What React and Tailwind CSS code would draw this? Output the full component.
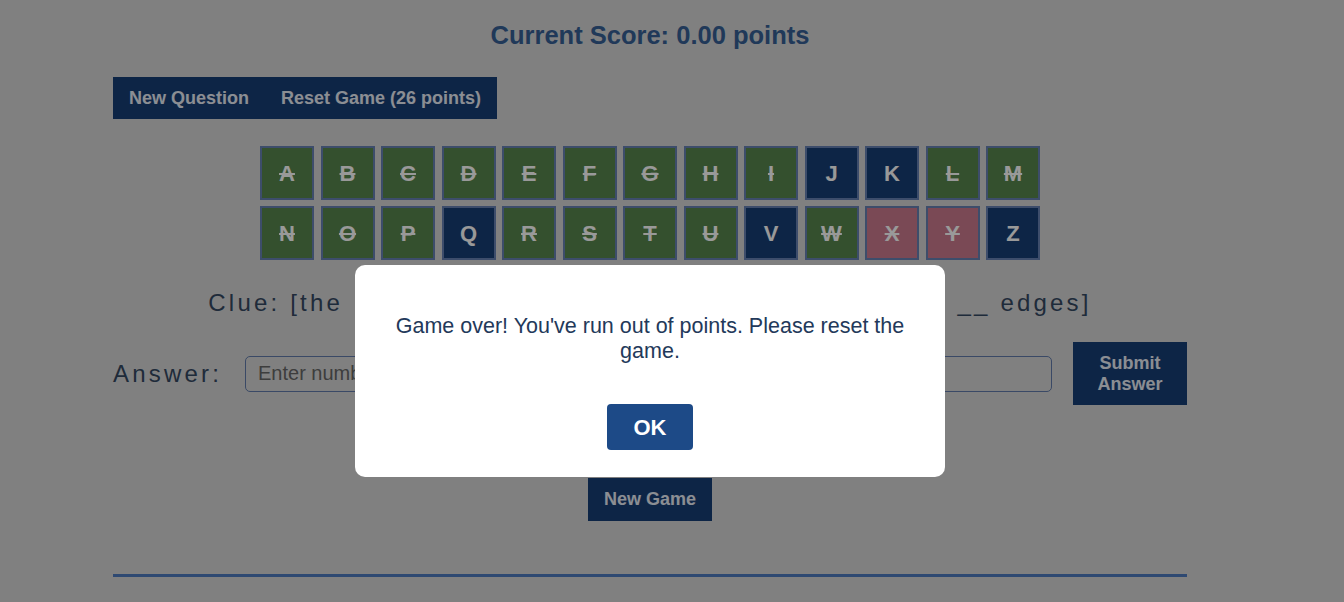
const LETTERS = [
  ['A', 'used'], ['B', 'used'], ['C', 'used'], ['D', 'used'], ['E', 'used'], ['F', 'used'], ['G', 'used'],
  ['H', 'used'], ['I', 'used'], ['J', 'open'], ['K', 'open'], ['L', 'used'], ['M', 'used'],
  ['N', 'used'], ['O', 'used'], ['P', 'used'], ['Q', 'open'], ['R', 'used'], ['S', 'used'], ['T', 'used'],
  ['U', 'used'], ['V', 'open'], ['W', 'used'], ['X', 'wrong'], ['Y', 'wrong'], ['Z', 'open'],
];

const tileStyles = {
  used: 'bg-[#57854d] line-through',
  wrong: 'bg-[#cb7b8e] line-through',
  open: 'bg-[#173e75] border-[#173e75]',
};

function Tile({ letter, state }) {
  return (
    <div
      className={`w-[54px] h-[54px] box-border border-2 border-[#6780b2] flex items-center justify-center text-[22px] font-bold text-white decoration-2 ${tileStyles[state]}`}
    >
      {letter}
    </div>
  );
}

export default function App() {
  return (
    <div className="min-h-[602px] bg-[#d6d6d6] font-['Liberation_Sans',Arial,sans-serif] relative overflow-hidden">
      <div className="ml-[113px] w-[1074px] flex flex-col">
        <h1 className="pt-[21px] h-[49px] text-center text-[25.5px] leading-[28px] font-bold text-[#365f95]">
          Current Score: 0.00 points
        </h1>

        <div className="mt-[28px] flex self-start bg-[#173e75]">
          <button className="px-4 h-[42px] text-[18px] font-bold text-[#e8edf5]">New Question</button>
          <button className="px-4 h-[42px] text-[18px] font-bold text-[#e8edf5]">Reset Game (26 points)</button>
        </div>

        <div className="mt-[27px] flex flex-col items-center gap-[6px]">
          <div className="flex gap-[6.5px]">
            {LETTERS.slice(0, 13).map(([l, s]) => (
              <Tile key={l} letter={l} state={s} />
            ))}
          </div>
          <div className="flex gap-[6.5px]">
            {LETTERS.slice(13).map(([l, s]) => (
              <Tile key={l} letter={l} state={s} />
            ))}
          </div>
        </div>

        <p className="mt-[28px] h-[30px] text-center text-[24px] leading-[30px] tracking-[3.2px] text-[#344862]">
          Clue: [the <span className="ml-[4px] tracking-[2.66px]">number of faces of a convex polyhedron with</span> __ edges]
        </p>

        <div className="mt-[24px] flex items-center">
          <label className="w-[132px] text-[24px] tracking-[3.2px] text-[#344862]">Answer:</label>
          <input
            type="text"
            placeholder="Enter number"
            className="w-[807px] h-[36px] px-3 rounded-[5px] border border-[#627baa] bg-transparent text-[20px] placeholder:text-[#666666] outline-none"
          />
          <button className="ml-[21px] w-[114px] h-[63px] bg-[#173e75] text-[18px] leading-[21px] font-bold text-[#e8edf5]">
            Submit
            <br />
            Answer
          </button>
        </div>

        <div className="mt-[73px] flex justify-center">
          <button className="w-[124px] h-[43px] bg-[#173e75] text-[18px] font-bold text-[#e8edf5]">New Game</button>
        </div>

        <hr className="mt-[53px] border-0 h-[3px] bg-[#4d7bbe]" />
      </div>

      <div className="fixed inset-0 bg-black/40">
        <div className="ml-[113px] w-[1074px] pt-[265px] flex justify-center">
          <div className="w-[590px] h-[212px] bg-white rounded-[10px] px-[38px] pt-[49px] flex flex-col items-center">
            <p className="text-center text-[21.5px] leading-[25px] text-[#23395a]">
              Game over! You've run out of points. Please reset the game.
            </p>
            <button className="mt-[40px] w-[86px] h-[46px] rounded-[4px] bg-[#1d4a87] text-white text-[22px] font-bold">
              OK
            </button>
          </div>
        </div>
      </div>
    </div>
  );
}
